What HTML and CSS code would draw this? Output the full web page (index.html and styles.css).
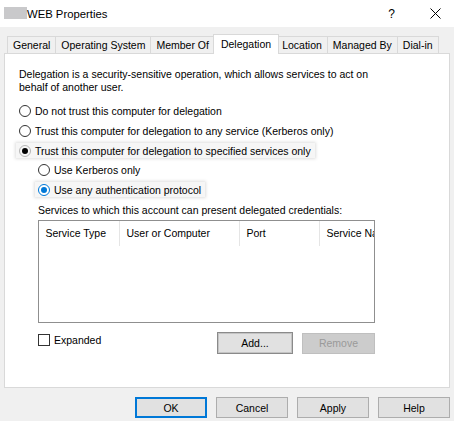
FILE: index.html
```html
<!DOCTYPE html>
<html>
<head>
<meta charset="utf-8">
<link rel="stylesheet" href="styles.css">
</head>
<body>
<div class="titlebar">
  <span class="blur"></span>
  <span class="title">WEB Properties</span>
  <span class="help">?</span>
  <svg class="close" width="11" height="11" viewBox="0 0 11 11"><path d="M0.5 0.5L10.5 10.5M10.5 0.5L0.5 10.5" stroke="#000" stroke-width="1" fill="none"/></svg>
</div>
<div class="tabs">
  <div class="tab">General</div>
  <div class="tab">Operating System</div>
  <div class="tab">Member Of</div>
  <div class="tab active">Delegation</div>
  <div class="tab">Location</div>
  <div class="tab">Managed By</div>
  <div class="tab">Dial-in</div>
</div>
<div class="panel">
  <p class="intro">Delegation is a security-sensitive operation, which allows services to act on<br>behalf of another user.</p>
  <div class="opt first"><span class="radio"></span><span>Do not trust this computer for delegation</span></div>
  <div class="opt"><span class="radio"></span><span>Trust this computer for delegation to any service (Kerberos only)</span></div>
  <div class="opt"><span class="hl"><span class="radio on faint"></span><span>Trust this computer for delegation to specified services only</span></span></div>
  <div class="opt sub"><span class="radio"></span><span>Use Kerberos only</span></div>
  <div class="opt sub"><span class="hl"><span class="radio on blue"></span><span>Use any authentication protocol</span></span></div>
  <div class="caption">Services to which this account can present delegated credentials:</div>
  <div class="list">
    <div class="list-head">
      <div class="col">Service Type</div>
      <div class="col">User or Computer</div>
      <div class="col">Port</div>
      <div class="col last">Service Name</div>
    </div>
  </div>
  <div class="below">
    <div class="check"><span class="box"></span><span>Expanded</span></div>
    <button class="btn add">Add...</button>
    <button class="btn remove" disabled>Remove</button>
  </div>
</div>
<div class="footer">
  <button class="btn default">OK</button>
  <button class="btn">Cancel</button>
  <button class="btn">Apply</button>
  <button class="btn">Help</button>
</div>
</body>
</html>
```
FILE: styles.css
```css
html, body {
  margin: 0;
  padding: 0;
}
body {
  width: 454px;
  height: 421px;
  overflow: hidden;
  background: #f0f0f0;
  font-family: "Liberation Sans", Arial, sans-serif;
  font-size: 10.5px;
  color: #000;
}
.titlebar {
  height: 27px;
  background: #fff;
  display: flex;
  align-items: center;
  padding-left: 4px;
}
.blur {
  width: 23px;
  height: 12px;
  background: #c9c9cb;
  margin-top: -1px;
}
.title {
  font-size: 11.3px;
}
.help {
  margin-left: auto;
  font-size: 12px;
  margin-right: 35px;
}
.close {
  margin-right: 13px;
}
.tabs {
  height: 26px;
  display: flex;
  align-items: flex-end;
  padding-left: 7px;
}
.tab {
  box-sizing: border-box;
  height: 17px;
  line-height: 15px;
  padding: 1px 5px 0;
  border: 1px solid #d9d9d9;
  border-left: none;
  border-bottom: none;
  background: #f0f0f0;
  white-space: nowrap;
}
.tab:first-child {
  border-left: 1px solid #d9d9d9;
}
.tab.active {
  height: 20px;
  line-height: 17px;
  padding: 1px 7px 0;
  margin: 0 -2px -1px;
  border-left: 1px solid #d9d9d9;
  background: #fff;
  position: relative;
  z-index: 1;
}
.panel {
  box-sizing: border-box;
  height: 335px;
  margin: 0 4px;
  border: 1px solid #d9d9d9;
  background: #fff;
  padding: 14px 14px 0;
}
.intro {
  margin: 0;
  line-height: 13px;
}
.opt {
  display: flex;
  align-items: center;
  height: 20px;
  white-space: nowrap;
}
.opt.first {
  margin-top: 6.5px;
}
.opt.sub {
  height: 19.5px;
  margin-left: 19px;
}
.radio {
  box-sizing: border-box;
  width: 12px;
  height: 12px;
  border: 1px solid #333;
  border-radius: 50%;
  background: #fff;
  margin-right: 4px;
  flex: none;
  position: relative;
}
.radio.on::after {
  content: "";
  position: absolute;
  left: 2px;
  top: 2px;
  width: 6px;
  height: 6px;
  border-radius: 50%;
  background: #000;
}
.radio.faint {
  border-color: #b5b5b5;
  background: transparent;
}
.radio.blue {
  border-color: #0078d7;
}
.radio.blue::after {
  background: #0078d7;
}
.hl {
  display: flex;
  align-items: center;
  height: 15px;
  margin-left: -3px;
  padding: 0 4px 0 3px;
  background: #f6f6f6;
  box-shadow: 0 0 3px 1px rgba(0, 0, 0, 0.13);
}
.caption {
  margin-left: 19px;
  height: 20px;
  line-height: 20px;
}
.list {
  box-sizing: border-box;
  margin-left: 19px;
  width: 337px;
  height: 103px;
  border: 1px solid #8f8f8f;
  background: #fff;
  overflow: hidden;
}
.list-head {
  display: grid;
  grid-template-columns: 81px 120px 80px 60px;
  height: 25px;
}
.col {
  border-right: 1px solid #e5e5e5;
  padding-left: 6.5px;
  line-height: 25px;
  white-space: nowrap;
  overflow: hidden;
}
.col.last {
  border-right: none;
}
.below {
  display: flex;
  align-items: flex-start;
  margin-left: 19px;
  width: 337px;
  margin-top: 9px;
}
.check {
  display: flex;
  align-items: center;
  margin-top: 1px;
  height: 14px;
}
.box {
  box-sizing: border-box;
  width: 12px;
  height: 12px;
  border: 1px solid #333;
  background: #fff;
  margin-right: 4px;
}
.btn {
  box-sizing: border-box;
  height: 21px;
  width: 72px;
  padding: 0;
  margin: 0;
  font: inherit;
  color: #000;
  background: #e1e1e1;
  border: 1px solid #adadad;
  display: flex;
  align-items: center;
  justify-content: center;
}
.btn.add {
  margin-left: auto;
  margin-right: 9px;
  width: 76px;
  height: 22px;
  border-color: #8a8a8a;
  box-shadow: inset 0 0 0 1px #c4c4c4;
}
.btn.remove {
  width: 73px;
  margin-top: 1px;
  background: #cccccc;
  border-color: #bfbfbf;
  color: #9a9a9a;
}
.footer {
  display: flex;
  justify-content: flex-end;
  gap: 9px;
  padding-right: 4px;
  margin-top: 9px;
}
.btn.default {
  border: 2px solid #0078d7;
}
```
